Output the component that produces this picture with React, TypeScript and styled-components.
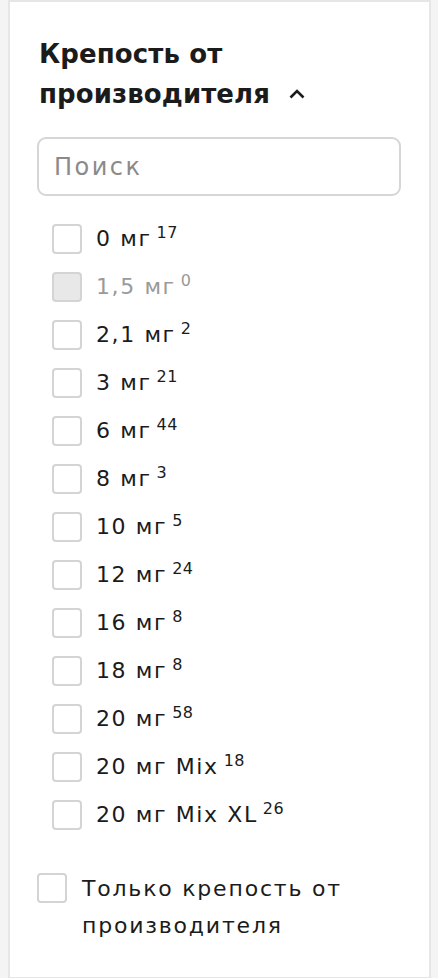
import React from "react";
import styled, { createGlobalStyle } from "styled-components";

const Global = createGlobalStyle`
  html, body { margin: 0; padding: 0; background: #f4f4f4; }
  body { font-family: "DejaVu Sans", "Noto Sans", sans-serif; color: #1b1b1b; }
`;

const Page = styled.div`
  padding: 0 7px 0 8px;
  height: 978px;
  box-sizing: border-box;
`;

const Card = styled.section`
  background: #fff;
  border: 2px solid #e6e6e6;
  border-bottom-width: 1px;
  height: 978px;
  box-sizing: border-box;
  padding: 32px 28px 0 27px;
`;

const Title = styled.h2`
  margin: 0 0 0 2px;
  font-size: 26px;
  line-height: 40px;
  font-weight: 700;
  letter-spacing: 0.1px;
`;

const Chevron = styled.svg`
  width: 18px;
  height: 12px;
  margin-left: 18px;
  vertical-align: 3px;
`;

const Search = styled.div`
  margin-top: 23px;
  height: 59px;
  box-sizing: border-box;
  border: 2px solid #d6d6d6;
  border-radius: 9px;
  display: flex;
  align-items: center;
  padding-left: 15px;
  font-size: 24px;
  letter-spacing: 2.5px;
  color: #8a8a8a;
`;

const List = styled.ul`
  list-style: none;
  margin: 28px 0 0;
  padding: 0 0 0 15px;
  display: flex;
  flex-direction: column;
  gap: 18px;
`;

const Row = styled.li<{ $disabled?: boolean }>`
  display: flex;
  align-items: center;
  height: 30px;
  gap: 14px;
  font-size: 22px;
  letter-spacing: 1.6px;
  color: ${(p) => (p.$disabled ? "#9a9a9a" : "#1b1b1b")};
`;

const Box = styled.span<{ $disabled?: boolean }>`
  width: 30px;
  height: 30px;
  flex: none;
  box-sizing: border-box;
  border: 2px solid #d4d4d4;
  border-radius: 4px;
  background: ${(p) => (p.$disabled ? "#e8e8e8" : "#fff")};
`;

const Label = styled.span`
  display: inline-flex;
  align-items: flex-start;
  line-height: 30px;
`;

const Count = styled.sup`
  font-size: 16px;
  line-height: 16px;
  letter-spacing: 0.5px;
  margin-left: 5px;
  position: relative;
  top: 1px;
`;

const Only = styled.div`
  margin-top: 43px;
  display: flex;
  align-items: flex-start;
  gap: 15px;
`;

const OnlyText = styled.span`
  font-size: 22px;
  letter-spacing: 1.8px;
  line-height: 37px;
  margin-top: -3px;
`;

const items: [string, number][] = [
  ["0 мг", 17],
  ["1,5 мг", 0],
  ["2,1 мг", 2],
  ["3 мг", 21],
  ["6 мг", 44],
  ["8 мг", 3],
  ["10 мг", 5],
  ["12 мг", 24],
  ["16 мг", 8],
  ["18 мг", 8],
  ["20 мг", 58],
  ["20 мг Mix", 18],
  ["20 мг Mix XL", 26],
];

export default function App() {
  return (
    <>
      <Global />
      <Page>
        <Card>
          <Title>
            Крепость от
            <br />
            производителя
            <Chevron viewBox="0 0 18 12">
              <path d="M2.5 9.5 L9 3 L15.5 9.5" fill="none" stroke="#1b1b1b" strokeWidth="2.6" />
            </Chevron>
          </Title>
          <Search>Поиск</Search>
          <List>
            {items.map(([t, c]) => (
              <Row key={t} $disabled={c === 0}>
                <Box $disabled={c === 0} />
                <Label>
                  {t}
                  <Count>{c}</Count>
                </Label>
              </Row>
            ))}
          </List>
          <Only>
            <Box />
            <OnlyText>
              Только крепость от
              <br />
              производителя
            </OnlyText>
          </Only>
        </Card>
      </Page>
    </>
  );
}
